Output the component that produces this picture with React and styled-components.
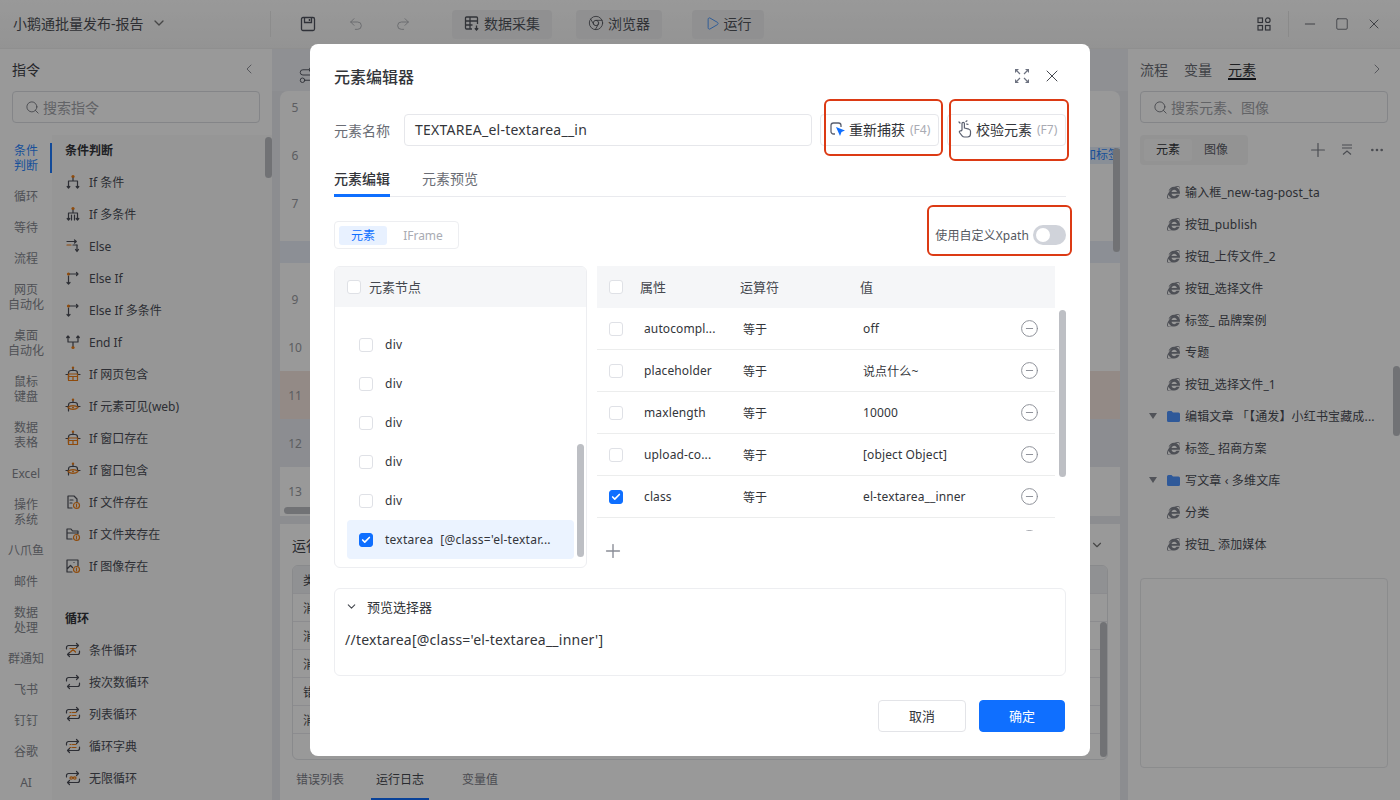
import React from 'react';
import styled, { createGlobalStyle } from 'styled-components';
import { Undo2, Redo2, Play, Chrome, Minus, Square, X, ChevronDown, ChevronLeft, ChevronRight, Search, Plus, Ellipsis, CircleMinus, Check, Route } from 'lucide-react';
import { FaInternetExplorer } from 'react-icons/fa';

const BLUE = '#0f6fff';
const INK = '#4b4e57';
const OR = '#ee7d14';

const Global = createGlobalStyle`
  html, body { margin: 0; padding: 0; height: 800px; overflow: hidden; background: #fff; }
  body { font-family: "Noto Sans", "Noto Sans CJK SC", sans-serif; font-size: 12px; color: #303133; }
  * { box-sizing: border-box; }
`;

const Page = styled.div`width: 1400px; height: 800px; display: flex; flex-direction: column; position: relative; overflow: hidden;`;
const TopBar = styled.header`height: 49px; flex: none; display: flex; align-items: center; background: linear-gradient(#ffffff, #f6f6f6); border-bottom: 1px solid #efefef;`;
const AppTitle = styled.div`width: 271px; height: 26px; display: flex; align-items: center; gap: 7px; padding: 0 0 2px 13px; font-size: 14px; color: #4d4f55; border-right: 1px solid #eaeaea; svg{color:#777}`;
const ToolIcon = styled.span`display: inline-flex; color: ${p => p.$off ? '#a9abb1' : '#50545f'}; margin-left: ${p => p.$ml}px;`;
const ToolBtn = styled.button`height: 29px; width: ${p => p.$w}px; margin-left: ${p => p.$ml}px; border: 0; border-radius: 4px; background: #f1f1f2; display: flex; align-items: center; justify-content: center; gap: 4px; font: inherit; font-size: 14px; color: #52555d; padding: 0 0 2px;`;
const WinGroup = styled.div`margin-left: auto; display: flex; align-items: center; color: #53565f; padding-right: 10px;`;
const WinDivider = styled.span`width: 1px; height: 26px; background: #e6e6e6; margin: 0 5px 0 16px;`;
const WinBtn = styled.span`display: inline-flex; width: 32px; justify-content: center;`;

const Main = styled.div`flex: 1; display: flex; min-height: 0;`;

const Sidebar = styled.aside`width: 272px; flex: none; display: flex; flex-direction: column; background: #fff; overflow: hidden; position: relative;`;
const SideHead = styled.div`height: 42px; flex: none; display: flex; align-items: center; justify-content: space-between; padding: 0 15px 2px 12px; font-size: 14px; color: #3f4249; svg{color:#7d8089}`;
const SearchBox = styled.div`height: 32px; margin: 0 12px; flex: none; border: 1px solid #dcdee3; border-radius: 4px; display: flex; align-items: center; gap: 3px; padding-left: 12px; color: #a3a5ab; font-size: 14px; svg{color:#676a73}`;
const SideBody = styled.div`flex: 1; display: flex; margin-top: 12px; min-height: 0;`;
const CatCol = styled.div`width: 52px; flex: none;`;
const Cat = styled.div`position: relative; padding: 8px 0; line-height: 15px; height: ${p => p.$two ? 46 : 31}px; font-size: 12px; text-align: center; white-space: pre-line; color: ${p => p.$on ? '#2a86ff' : '#85888f'};
  ${p => p.$on && `&::after{content:"";position:absolute;right:0;top:8px;bottom:8px;width:2px;background:#1f7cff;}`}`;
const ItemCol = styled.div`flex: 1; background: #fafafa; padding-left: 13px; position: relative; overflow: hidden;`;
const SecTitle = styled.div`height: 31px; line-height: 32px; font-size: 12px; font-weight: 700; color: #33353a; margin-top: ${p => p.$mt || 0}px;`;
const Cmd = styled.div`height: 32px; display: flex; align-items: center; gap: 8px; font-size: 12px; color: ${INK};`;
const ScrollThumb = styled.div`position: absolute; width: 7px; border-radius: 4px; background: #bdbfc4; top: ${p => p.$t}px; height: ${p => p.$h}px; right: ${p => p.$r}px;`;

const Center = styled.main`flex: 1; min-width: 0; background: #e9ebf1; padding: 0 8px; display: flex; flex-direction: column;`;
const CenterHead = styled.div`height: 42px; flex: none; display: flex; align-items: center; padding: 10px 0 0 17px; color: #545863; background: #eef0f5; margin: 0 -8px; padding-left: 26px;`;
const Flow = styled.section`height: 425px; flex: none; background: #fff; border-radius: 8px 8px 0 0; overflow: hidden; position: relative;`;
const FlowRows = styled.div`margin-top: -8px;`;
const FlowRow = styled.div`height: 48px; display: flex; align-items: center; background: ${p => p.$bg || 'transparent'}; position: relative;`;
const LineNo = styled.span`width: 30px; text-align: center; font-size: 12px; color: #9a9ca2;`;
const RowBand = styled.div`position: absolute; left: 0; right: 0; top: 14px; height: 22px; background: #e9eef8;`;
const Tag = styled.span`margin-left: auto; height: 17px; line-height: 16px; background: #e5eefc; color: #2a86ff; font-size: 12px; white-space: nowrap;`;
const HScroll = styled.div`position: absolute; left: 4px; bottom: 2px; height: 7px; width: 120px; background: #bdbfc4; border-radius: 4px;`;
const LogPanel = styled.section`flex: 1; margin-top: 8px; background: #fff; position: relative; padding: 0 12px; min-height: 0;`;
const LogTitle = styled.div`height: 41px; display: flex; align-items: center; justify-content: space-between; font-size: 14px; color: #45484f; svg{color:#777; margin-right:4px}`;
const LogTable = styled.div`height: 195px; border: 1px solid #e4e6ea; border-radius: 6px; overflow: hidden; font-size: 12px; color: #45484f;`;
const LogRow = styled.div`height: 28px; display: flex; align-items: center; padding-left: 10px; border-bottom: 1px solid #e9eaee; background: ${p => p.$head ? '#f1f2f5' : 'transparent'};`;
const LogTabs = styled.div`display: flex; height: 40px; align-items: center; font-size: 12px; position: absolute; left: 4px; bottom: 0;`;
const LogTab = styled.span`height: 40px; line-height: 40px; padding: 0 ${p => p.$pad}px; margin-left: ${p => p.$ml || 0}px; color: ${p => p.$on ? '#45484f' : '#7d8089'}; position: relative;
  ${p => p.$on && `&::after{content:"";position:absolute;left:0;right:0;bottom:0;height:2px;background:${BLUE};}`}`;

const Right = styled.aside`width: 272px; flex: none; background: #fff; display: flex; flex-direction: column; position: relative; overflow: hidden;`;
const RightTabs = styled.div`height: 42px; flex: none; display: flex; align-items: center; padding: 0 15px 2px 12px; gap: 16px; font-size: 14px; color: #6c6f77; svg{margin-left:auto;color:#7d8089}`;
const RightTab = styled.span`position: relative; color: ${p => p.$on ? '#33353a' : '#6c6f77'};
  ${p => p.$on && `&::after{content:"";position:absolute;left:0;right:0;bottom:-1px;height:2px;background:#1d2129;}`}`;
const SegRow = styled.div`display: flex; align-items: center; margin: 12px 12px 0; height: 30px; color: #7d8089;`;
const Seg = styled.div`width: 108px; height: 30px; background: #f5f5f6; border-radius: 4px; display: flex; align-items: center; padding: 0 4px; font-size: 12px; color: #5d6068;`;
const SegOpt = styled.span`width: 48px; height: 22px; line-height: 22px; text-align: center; border-radius: 3px; background: ${p => p.$on ? '#fbfbfb' : 'transparent'}; color: ${p => p.$on ? '#33353a' : '#5d6068'};`;
const SegTools = styled.div`margin-left: auto; display: flex; gap: 11px; align-items: center; padding-right: 3px;`;
const Tree = styled.div`margin-top: 11px; display: flex; flex-direction: column;`;
const TreeRow = styled.div`height: 32px; display: flex; align-items: center; padding-left: 21px; font-size: 12px; letter-spacing: .15px; color: ${INK}; white-space: nowrap;`;
const Caret = styled.span`width: 18px; flex: none; display: inline-flex;`;
const TreeGlyph = styled.span`width: 13px; flex: none; margin-right: 5px; display: inline-flex; color: #82858f;`;
const Preview = styled.div`margin: 18px 12px 0; height: 190px; border: 1px solid #e8e9ec; border-radius: 4px;`;

const Overlay = styled.div`position: absolute; inset: 0; background: rgba(0,0,0,.4); display: flex; align-items: center; justify-content: center;`;
const Modal = styled.div`width: 780px; height: 712px; background: #fff; border-radius: 8px; padding: 0 24px; display: flex; flex-direction: column;`;
const ModalHead = styled.div`height: 64px; flex: none; display: flex; align-items: center; padding-bottom: 1px; font-size: 16px; font-weight: 500; color: #33353a;`;
const HeadTools = styled.div`margin-left: auto; display: flex; align-items: center; gap: 13px; padding-right: 4px; color: #45484f;`;
const NameRow = styled.div`margin-top: 6px; height: 32px; flex: none; display: flex; align-items: center;`;
const NameLabel = styled.label`width: 70px; font-size: 14px; color: #6a6d75; padding-bottom: 1px;`;
const NameInput = styled.div`width: 408px; height: 32px; border: 1px solid #e6e7eb; border-radius: 4px; padding-left: 10px; line-height: 29px; font-size: 14px; letter-spacing: .25px; color: #33353a;`;
const CaptureBtn = styled.button`position: relative; width: 119px; height: 32px; margin-left: ${p => p.$ml}px; border: 1px solid #e6e7eb; border-radius: 4px; background: #fff; display: flex; align-items: center; padding: 0 0 2px 9px; gap: 3px; font: inherit; font-size: 14px; color: #33353a; white-space: nowrap;`;
const Key = styled.span`font-size: 12px; color: #a9abb3; margin-left: 2px;`;
const RedFrame = styled.span`position: absolute; border: 2px solid #dc3a14; border-radius: 6px; left: ${p => p.$l}px; top: ${p => p.$t}px; width: ${p => p.$w}px; height: ${p => p.$h}px; pointer-events: none;`;
const Tabs = styled.div`margin-top: 20px; height: 31px; flex: none; display: flex; gap: 32px; border-bottom: 1px solid #e9eaee; font-size: 14px;`;
const Tab = styled.span`height: 30px; line-height: 26px; position: relative; color: ${p => p.$on ? '#33353a' : '#6a6d75'}; font-weight: ${p => p.$on ? 500 : 400};
  ${p => p.$on && `&::after{content:"";position:absolute;left:0;right:0;bottom:-1px;height:3px;background:${BLUE};}`}`;
const ToolRow = styled.div`margin-top: 24px; height: 28px; flex: none; display: flex; align-items: center; justify-content: space-between;`;
const Mode = styled.div`width: 125px; height: 28px; border: 1px solid #edeef1; border-radius: 4px; display: flex; align-items: center; padding: 0 4px; font-size: 12px; color: #a9abb3;`;
const ModeOpt = styled.span`width: 48px; height: 19px; line-height: 19px; text-align: center; border-radius: 3px; color: ${p => p.$on ? BLUE : '#a9abb3'}; background: ${p => p.$on ? '#e8f1ff' : 'transparent'}; margin-left: ${p => p.$ml || 0}px; white-space: nowrap;`;
const XpathWrap = styled.div`position: relative; display: flex; align-items: center; gap: 4px; font-size: 12px; letter-spacing: .08px; color: #55585f; white-space: nowrap;`;
const Switch = styled.span`display: inline-flex; align-items: center; width: 33px; height: 20px; border-radius: 10px; background: #d0d3da; padding-left: 3px; &::before{content:"";width:14px;height:14px;border-radius:50%;background:#fff;}`;
const Panels = styled.div`margin-top: 17px; height: 302px; flex: none; display: flex; gap: 10px;`;
const NodePanel = styled.div`width: 253px; flex: none; border: 1px solid #edeef1; border-radius: 6px; position: relative; overflow: hidden;`;
const PanelHead = styled.div`height: 40px; background: #f5f6f8; display: flex; align-items: center; padding: 0 0 0 12px; gap: 8px; font-size: 13px; color: #45484f; line-height: 38px;`;
const NodeBody = styled.div`padding: 18px 12px 0;`;
const NodeRow = styled.div`height: 39px; display: flex; align-items: center; gap: 12px; padding-left: 12px; border-radius: 4px; font-size: 12px; letter-spacing: .25px; color: #33353a; white-space: pre; background: ${p => p.$on ? '#ebf3ff' : 'transparent'}; width: 227px;`;
const AttrPanel = styled.div`flex: 1; position: relative; min-width: 0;`;
const AttrHead = styled.div`width: 458px; height: 42px; background: #f5f6f8; display: flex; align-items: center; padding-left: 12px; font-size: 13px; line-height: 38px; color: #45484f;`;
const AttrBody = styled.div`width: 458px; height: 223px; overflow: hidden;`;
const AttrRow = styled.div`height: 42px; display: flex; align-items: center; padding-left: 12px; border-bottom: 1px solid #eceded; font-size: 12px; letter-spacing: .12px; color: #33353a;`;
const ColAttr = styled.span`width: ${p => p.$w}px; flex: none; white-space: nowrap; padding-left: ${p => p.$pl || 0}px;`;
const AddBtn = styled.div`margin: 9px 0 0 5px; height: 22px; display: flex; align-items: center; color: #8a8d96;`;
const PreviewBox = styled.div`margin-top: 20px; height: 88px; flex: none; border: 1px solid #edeef1; border-radius: 6px; padding: 0 10px;`;
const PreviewHead = styled.div`height: 36px; display: flex; align-items: center; gap: 9px; padding-bottom: 2px; font-size: 13px; color: #33353a; svg{color:#45484f;}`;
const Xpath = styled.div`margin-top: 4px; font-size: 14px; letter-spacing: .23px; color: #33353a; line-height: 22px;`;
const Footer = styled.div`margin-top: 24px; flex: none; display: flex; justify-content: flex-end; gap: 13px; padding-right: 1px;`;
const Btn = styled.button`height: 32px; width: ${p => p.$w}px; border-radius: 4px; font: inherit; font-size: 13px; padding: 0 0 2px; border: 1px solid ${p => p.$primary ? BLUE : '#e3e4e8'}; background: ${p => p.$primary ? BLUE : '#fff'}; color: ${p => p.$primary ? '#fff' : '#33353a'};`;

const Box = styled.span`width: 14px; height: 14px; flex: none; display: inline-flex; align-items: center; justify-content: center; border-radius: 3px; border: 1px solid ${p => p.$on ? BLUE : '#dfe1e6'}; background: ${p => p.$on ? BLUE : '#fff'}; color: #fff;`;
const CB = ({ on }) => <Box $on={on}>{on && <Check size={10} strokeWidth={4} />}</Box>;

const S = ({ children, size = 16 }) => <svg width={size} height={size} viewBox="0 0 16 16" fill="none" stroke={INK} strokeWidth="1.2" strokeLinecap="round" strokeLinejoin="round" style={{ flex: 'none' }}>{children}</svg>;
const Dot = ({ x, y, r = 1.6 }) => <circle cx={x} cy={y} r={r} fill={OR} stroke="none" />;

const IfIcon = ({ multi }) => <S><Dot x={8} y={2.5} /><path d="M8 4v3M3.5 14V7h9v7M2.2 12.5l1.3 1.5 1.3-1.5M11.2 12.5l1.3 1.5 1.3-1.5" />{multi && <path d="M6.5 14V9M9.500 14V9" />}</S>;
const ElseIcon = () => <S><path d="M2 3.5h9M9.5 2l1.8 1.5L9.5 5M12 7v6M10.5 11.5L12 13.5l1.5-2" /><path d="M2 7h4" stroke={OR} /><path d="M8 7h4" /></S>;
const ElseIfIcon = () => <S><Dot x={3.5} y={4} /><path d="M5 4h8M11.5 2.5L13 4l-1.5 1.5M3.5 6v8M2 12.5l1.5 1.5 1.5-1.5" /></S>;
const EndIfIcon = () => <S><Dot x={8} y={13.5} /><path d="M8 12V8M3 2v6h10V2M1.7 3.5L3 2l1.3 1.5M11.7 3.5L13 2l1.3 1.5" /></S>;
const BotIcon = ({ eye }) => <S><Dot x={8} y={1.8} r={1.2} /><path d="M8 3v1.500M3.500 13V7a2.500 2.500 0 0 1 2.500-2.500h4A2.500 2.500 0 0 1 12.500 7v1M1 8.500h2M13 8.500h2" />{eye ? <><path d="M3 9.500c2.500-2.500 7.500-2.500 10 0-2.500 2.500-7.500 2.500-10 0z" stroke={OR} /><circle cx="8" cy="9.500" r="1" fill={OR} stroke="none" /></> : <><rect x="3.500" y="8" width="9" height="6.500" stroke={OR} /><path d="M3.500 10.500h9M8 10.500v4" stroke={OR} /></>}</S>;
const FileIcon = () => <S><path d="M7 14H3V2h6l3 3v3M5 6h3M5 9h2" /><circle cx="11.500" cy="11.500" r="3" stroke={OR} /><path d="M11.500 10v3" stroke={OR} /></S>;
const FolderIcon = () => <S><path d="M7 13H2V3h4l1.500 2H13v2.500M2 7h11" /><circle cx="11.500" cy="11.500" r="3" stroke={OR} /><path d="M11.500 10v3" stroke={OR} /></S>;
const ImageIcon = () => <S><path d="M7 14H2V2h11v6M2 11l3.500-3.500 2 2M9 4.500h.01" /><circle cx="11.500" cy="11.500" r="3" stroke={OR} /><path d="M11.500 10v3" stroke={OR} /></S>;
const LoopBase = ({ children }) => <S><path d="M1.500 7V5.500a2 2 0 0 1 2-2h10M11.500 1.500l2 2-2 2M14.500 9v1.500a2 2 0 0 1-2 2h-10M4.500 10.500l-2 2 2 2" />{children}</S>;
const CondLoop = () => <LoopBase><path d="M5 6.500h6M8 6.500v2M5.500 10l1.500-1.500h2L10.500 10" stroke={OR} /></LoopBase>;
const CountLoop = () => <LoopBase />;
const ListLoop = () => <LoopBase><path d="M5 6.500h1M7.500 6.500H11M5 9.500h1M7.500 9.500H11" stroke={OR} /></LoopBase>;
const InfLoop = () => <LoopBase><path d="M8 8c-1-1.500-3-1.500-3 0s2 1.500 3 0 3-1.500 3 0-2 1.500-3 0z" stroke={OR} /></LoopBase>;

const SaveIcon = () => <svg width="16" height="16" viewBox="0 0 16 16" fill="none" stroke="currentColor" strokeWidth="1.300"><rect x="1.500" y="1.500" width="13" height="13" rx="1.500" /><path d="M4.500 1.500v5h7v-5" /><path d="M9.500 3v2" strokeWidth="1.500" /></svg>;
const CollectIcon = () => <svg width="16" height="16" viewBox="0 0 16 16" fill="none" stroke="currentColor" strokeWidth="1.300"><path d="M8 14H2.500a1 1 0 0 1-1-1V3a1 1 0 0 1 1-1h10a1 1 0 0 1 1 1v6M1.500 6h12M1.500 10h7M6 2v12" /><path d="M12.500 10.500V15M10.800 13.300l1.700 1.700 1.700-1.700" /></svg>;
const ExpandIcon = () => <svg width="14" height="14" viewBox="0 0 14 14" fill="#6d7280"><path d="M0 0h4L0 4zM14 0h-4l4 4zM0 14h4l-4-4zM14 14h-4l4-4z" /><path d="M2 2l3 3M12 2L9 5M2 12l3-3M12 12L9 9" stroke="#6d7280" strokeWidth="1.200" /></svg>;
const CaptureIcon = () => <svg width="16" height="16" viewBox="0 0 16 16" fill="none" style={{ flex: 'none' }}><path d="M5 13H3.500A2.500 2.500 0 0 1 1 10.500v-6A2.500 2.500 0 0 1 3.500 2h5A2.500 2.500 0 0 1 11 4.500V6" stroke="#5a6070" strokeWidth="1.300" /><path d="M6 6l9 3.500-3.500 1.500L10 15z" fill={BLUE} /></svg>;
const HandIcon = () => <svg width="16" height="18" viewBox="0 0 16 18" fill="none" stroke="#5a6070" strokeWidth="1.200" strokeLinecap="round" strokeLinejoin="round" style={{ flex: 'none' }}><path d="M5 10V3.500a1.200 1.200 0 0 1 2.400 0V8l4.500 1.200c1 .3 1.600 1 1.600 2V14a3 3 0 0 1-3 3H7.500a3 3 0 0 1-2.400-1.200L2.500 12.500c-.7-1 .5-2.200 1.500-1.500z" /><path d="M3 3l-1-1M9 1.500L10 .8M9.500 4l1.500.3" /></svg>;
const AppsIcon = () => <svg width="16" height="16" viewBox="0 0 16 16" fill="none" stroke="currentColor" strokeWidth="1.200"><rect x="2" y="2" width="4.500" height="4.500" /><rect x="2" y="9.500" width="4.500" height="4.500" /><circle cx="11.800" cy="4.200" r="2.300" /><rect x="9.500" y="9.500" width="4.500" height="4.500" /></svg>;
const CollapseIcon = () => <svg width="14" height="14" viewBox="0 0 14 14" fill="none" stroke="currentColor" strokeWidth="1.200"><path d="M2 2h10M2 5h10M3 11.500L7 8l4 3.500" /></svg>;
const FolderGlyph = () => <svg width="13" height="11" viewBox="0 0 13 11"><path d="M0 1.500A1.500 1.500 0 0 1 1.500 0h3L6 1.500h5.500A1.500 1.500 0 0 1 13 3v6.500a1.500 1.500 0 0 1-1.500 1.500h-10A1.500 1.500 0 0 1 0 9.500z" fill="#4f94ff" /></svg>;
const Tri = () => <svg width="8" height="6" viewBox="0 0 8 6"><path d="M0 0h8L4 6z" fill="#888b94" /></svg>;

const cats = ['条件\n判断', '循环', '等待', '流程', '网页\n自动化', '桌面\n自动化', '鼠标\n键盘', '数据\n表格', 'Excel', '操作\n系统', '八爪鱼', '邮件', '数据\n处理', '群通知', '飞书', '钉钉', '谷歌', 'AI'];
const cond = [['If 条件', <IfIcon />], ['If 多条件', <IfIcon multi />], ['Else', <ElseIcon />], ['Else If', <ElseIfIcon />], ['Else If 多条件', <ElseIfIcon />], ['End If', <EndIfIcon />], ['If 网页包含', <BotIcon />], ['If 元素可见(web)', <BotIcon eye />], ['If 窗口存在', <BotIcon />], ['If 窗口包含', <BotIcon eye />], ['If 文件存在', <FileIcon />], ['If 文件夹存在', <FolderIcon />], ['If 图像存在', <ImageIcon />]];
const loops = [['条件循环', <CondLoop />], ['按次数循环', <CountLoop />], ['列表循环', <ListLoop />], ['循环字典', <ListLoop />], ['无限循环', <InfLoop />]];
const tree = [['输入框_new-tag-post_ta'], ['按钮_publish'], ['按钮_上传文件_2'], ['按钮_选择文件'], ['标签_ 品牌案例'], ['专题'], ['按钮_选择文件_1'], ['编辑文章 「【通发】小红书宝藏成...', 1], ['标签_ 招商方案'], ['写文章 ‹ 多维文库', 1], ['分类'], ['按钮_ 添加媒体']];
const attrs = [['autocompl...', 'off'], ['placeholder', '说点什么~'], ['maxlength', '10000'], ['upload-co...', '[object Object]'], ['class', 'el-textarea__inner', 1]];
const rowBg = { 11: '#f5e6e0', 12: '#eaecf2' };
const thin = { strokeWidth: 1.3 };

export default function App() {
  return (
    <Page>
      <Global />
      <TopBar>
        <AppTitle>小鹅通批量发布-报告<ChevronDown size={16} /></AppTitle>
        <ToolIcon $ml={29}><SaveIcon /></ToolIcon>
        <ToolIcon $off $ml={32}><Undo2 size={16} {...thin} /></ToolIcon>
        <ToolIcon $off $ml={31}><Redo2 size={16} {...thin} /></ToolIcon>
        <ToolBtn $w={100} $ml={41}><CollectIcon />数据采集</ToolBtn>
        <ToolBtn $w={86} $ml={24}><Chrome size={16} {...thin} />浏览器</ToolBtn>
        <ToolBtn $w={72} $ml={30}><Play size={15} color="#2a86ff" {...thin} />运行</ToolBtn>
        <WinGroup>
          <AppsIcon />
          <WinDivider />
          <WinBtn><Minus size={16} {...thin} /></WinBtn>
          <WinBtn><Square size={14} {...thin} /></WinBtn>
          <WinBtn><X size={16} {...thin} /></WinBtn>
        </WinGroup>
      </TopBar>
      <Main>
        <Sidebar>
          <SideHead>指令<ChevronLeft size={16} {...thin} /></SideHead>
          <SearchBox><Search size={15} {...thin} />搜索指令</SearchBox>
          <SideBody>
            <CatCol>{cats.map((c, i) => <Cat key={c} $on={i === 0} $two={c.includes('\n')}>{c}</Cat>)}</CatCol>
            <ItemCol>
              <SecTitle>条件判断</SecTitle>
              {cond.map(([t, ic]) => <Cmd key={t}>{ic}{t}</Cmd>)}
              <SecTitle $mt={21}>循环</SecTitle>
              {loops.map(([t, ic]) => <Cmd key={t}>{ic}{t}</Cmd>)}
              <ScrollThumb $t={2} $h={41} $r={0} />
            </ItemCol>
          </SideBody>
        </Sidebar>
        <Center>
          <CenterHead><Route size={18} {...thin} /></CenterHead>
          <Flow>
            <FlowRows>
              {[5, 6, 7, 8, 9, 10, 11, 12, 13].map(n => (
                <FlowRow key={n} $bg={rowBg[n]}>
                  {n === 8 && <RowBand />}
                  <LineNo>{n}</LineNo>
                  {n === 6 && <Tag>添加标签</Tag>}
                </FlowRow>
              ))}
            </FlowRows>
            <ScrollThumb $t={57} $h={104} $r={0} />
            <HScroll />
          </Flow>
          <LogPanel>
            <LogTitle>运行日志<ChevronDown size={14} /></LogTitle>
            <LogTable>
              <LogRow $head>类型</LogRow>
              {['消息', '消息', '消息', '错误', '消息'].map((t, i) => <LogRow key={i}>{t}</LogRow>)}
            </LogTable>
            <ScrollThumb $t={98} $h={135} $r={13} />
            <LogTabs>
              <LogTab $pad={12}>错误列表</LogTab>
              <LogTab $on $pad={5} $ml={15}>运行日志</LogTab>
              <LogTab $pad={33}>变量值</LogTab>
            </LogTabs>
          </LogPanel>
        </Center>
        <Right>
          <RightTabs>
            <RightTab>流程</RightTab><RightTab>变量</RightTab><RightTab $on>元素</RightTab>
            <ChevronRight size={16} {...thin} />
          </RightTabs>
          <SearchBox><Search size={15} {...thin} />搜索元素、图像</SearchBox>
          <SegRow>
            <Seg><SegOpt $on>元素</SegOpt><SegOpt>图像</SegOpt></Seg>
            <SegTools><Plus size={22} {...thin} /><CollapseIcon /><Ellipsis size={16} style={{ marginLeft: 4 }} /></SegTools>
          </SegRow>
          <Tree>
            {tree.map(([t, folder]) => (
              <TreeRow key={t}>
                <Caret>{folder && <Tri />}</Caret>
                <TreeGlyph>{folder ? <FolderGlyph /> : <FaInternetExplorer size={13} />}</TreeGlyph>
                {t}
              </TreeRow>
            ))}
          </Tree>
          <Preview />
          <ScrollThumb $t={317} $h={70} $r={0} />
        </Right>
      </Main>
      <Overlay>
        <Modal>
          <ModalHead>元素编辑器
            <HeadTools><ExpandIcon /><X size={20} strokeWidth={1.2} /></HeadTools>
          </ModalHead>
          <NameRow>
            <NameLabel>元素名称</NameLabel>
            <NameInput>TEXTAREA_el-textarea__in</NameInput>
            <CaptureBtn $ml={8}><CaptureIcon />重新捕获<Key>(F4)</Key><RedFrame $l={3} $t={-16} $w={119} $h={57} /></CaptureBtn>
            <CaptureBtn $ml={8}><HandIcon />校验元素<Key>(F7)</Key><RedFrame $l={1} $t={-16} $w={120} $h={62} /></CaptureBtn>
          </NameRow>
          <Tabs><Tab $on>元素编辑</Tab><Tab>元素预览</Tab></Tabs>
          <ToolRow>
            <Mode><ModeOpt $on>元素</ModeOpt><ModeOpt $ml={12}>IFrame</ModeOpt></Mode>
            <XpathWrap>使用自定义Xpath<Switch /><RedFrame $l={-8} $t={-20} $w={145} $h={51} /></XpathWrap>
          </ToolRow>
          <Panels>
            <NodePanel>
              <PanelHead><CB />元素节点</PanelHead>
              <NodeBody>
                {[0, 1, 2, 3, 4].map(i => <NodeRow key={i}><CB />div</NodeRow>)}
                <NodeRow $on><CB on />textarea  [@class='el-textar...</NodeRow>
              </NodeBody>
              <ScrollThumb $t={177} $h={113} $r={2} />
            </NodePanel>
            <AttrPanel>
              <AttrHead>
                <CB /><ColAttr $w={117} $pl={17}>属性</ColAttr><ColAttr $w={120}>运算符</ColAttr><ColAttr>值</ColAttr>
              </AttrHead>
              <AttrBody>
                {attrs.map(([a, v, on]) => (
                  <AttrRow key={a}>
                    <CB on={on} />
                    <ColAttr $w={120} $pl={21}>{a}</ColAttr>
                    <ColAttr $w={120}>等于</ColAttr>
                    <ColAttr $w={157}>{v}</ColAttr>
                    <CircleMinus size={19} color="#8a8d96" strokeWidth={1.2} />
                  </AttrRow>
                ))}
                <AttrRow><CB /><ColAttr $w={397} /><CircleMinus size={19} color="#8a8d96" strokeWidth={1.2} /></AttrRow>
              </AttrBody>
              <AddBtn><Plus size={22} strokeWidth={1.5} /></AddBtn>
              <ScrollThumb $t={44} $h={167} $r={0} />
            </AttrPanel>
          </Panels>
          <PreviewBox>
            <PreviewHead><ChevronDown size={13} />预览选择器</PreviewHead>
            <Xpath>//textarea[@class='el-textarea__inner']</Xpath>
          </PreviewBox>
          <Footer>
            <Btn $w={88}>取消</Btn>
            <Btn $w={86} $primary>确定</Btn>
          </Footer>
        </Modal>
      </Overlay>
    </Page>
  );
}
